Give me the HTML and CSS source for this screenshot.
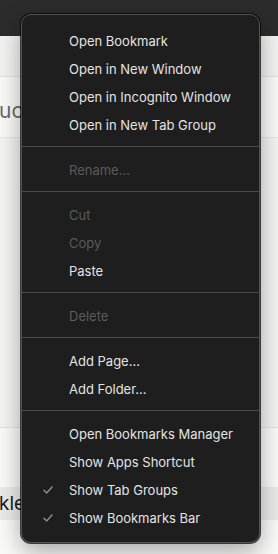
FILE: index.html
```html
<!DOCTYPE html>
<html lang="en">
<head>
    <meta charset="UTF-8">
    <meta name="viewport" content="width=device-width, initial-scale=1.0">
    <title>Bookmark Menu</title>
    <link rel="stylesheet" href="styles.css">
</head>
<body>
    <!-- Page behind the menu -->
    <div class="topbar"></div>
    <div class="page">
        <div class="band"></div>
        <div class="row-white"><span class="faded-title">uo</span></div>
        <div class="band-tall"></div>
        <div class="row-white short"></div>
        <div class="row-gray"><span class="dark-title">kle</span></div>
        <div class="row-white"></div>
    </div>

    <!-- Context menu -->
    <div class="menu">
        <div class="item">Open Bookmark</div>
        <div class="item">Open in New Window</div>
        <div class="item">Open in Incognito Window</div>
        <div class="item">Open in New Tab Group</div>
        <div class="sep"></div>
        <div class="item disabled">Rename...</div>
        <div class="sep"></div>
        <div class="item disabled">Cut</div>
        <div class="item disabled">Copy</div>
        <div class="item">Paste</div>
        <div class="sep"></div>
        <div class="item disabled">Delete</div>
        <div class="sep"></div>
        <div class="item">Add Page...</div>
        <div class="item">Add Folder...</div>
        <div class="sep"></div>
        <div class="item">Open Bookmarks Manager</div>
        <div class="item">Show Apps Shortcut</div>
        <div class="item"><svg class="check" viewBox="0 0 10 8"><polyline points="1,4.2 3.6,7 9,1"/></svg>Show Tab Groups</div>
        <div class="item"><svg class="check" viewBox="0 0 10 8"><polyline points="1,4.2 3.6,7 9,1"/></svg>Show Bookmarks Bar</div>
    </div>
</body>
</html>
```

FILE: styles.css
```css
body {
    margin: 0;
    width: 278px;
    height: 554px;
    overflow: hidden;
    position: relative;
    background-color: #fff;
    font-family: Inter, "Noto Sans", sans-serif;
}
.topbar {
    height: 36px;
    background-color: #2c2c2c;
}
.band {
    height: 40px;
    background-color: #f3f3f1;
    border-bottom: 1px solid #e2e2e0;
}
.row-white {
    height: 60px;
    background-color: #fafaf9;
    border-bottom: 1px solid #e6e6e4;
    display: flex;
    align-items: center;
}
.row-white.short {
    height: 59px;
    border-bottom: none;
}
.band-tall {
    height: 289px;
    background-color: #f4f4f2;
    border-bottom: 1px solid #e2e2e0;
}
.row-gray {
    height: 33px;
    background-color: #ebebea;
    display: flex;
    align-items: center;
}
.faded-title {
    font-size: 21px;
    color: #6a6a6a;
    margin-left: -1px;
    padding-top: 6px;
}
.dark-title {
    font-size: 19px;
    color: #1a1a1a;
    margin-left: -1px;
}
.menu {
    position: absolute;
    top: 14px;
    left: 21px;
    width: 237px;
    padding: 12px 0 10px;
    background-color: #1e1e1e;
    border: 1px solid #545454;
    border-radius: 10px;
    box-shadow: 0 0 0 1px rgba(0, 0, 0, 0.7), 0 8px 24px rgba(0, 0, 0, 0.35);
}
.item {
    position: relative;
    height: 28px;
    line-height: 28px;
    padding-left: 47px;
    font-size: 13px;
    color: #e4e4e4;
    white-space: nowrap;
}
.item.disabled {
    color: #5b5b5b;
}
.check {
    position: absolute;
    left: 21px;
    top: 10px;
    width: 10px;
    height: 8px;
    fill: none;
    stroke: #8c8c8c;
    stroke-width: 1.5;
    stroke-linecap: round;
    stroke-linejoin: round;
}
.sep {
    height: 1px;
    margin: 7px 0 9px;
    background-color: #4a4a4a;
}
```
